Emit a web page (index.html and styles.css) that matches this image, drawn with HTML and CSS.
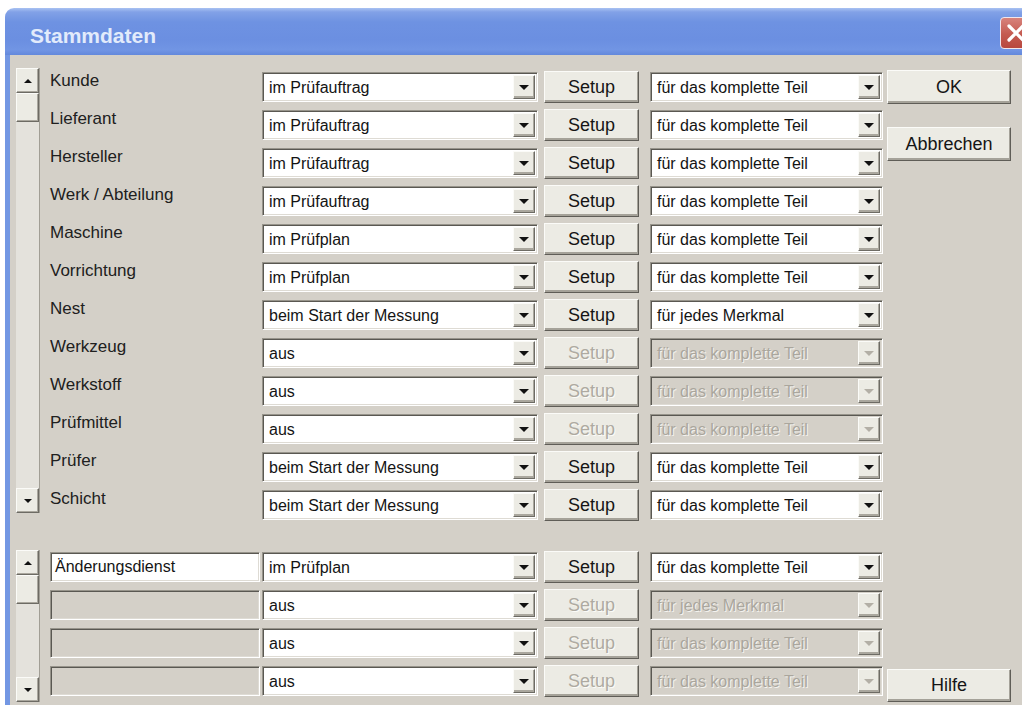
FILE: index.html
```html
<!DOCTYPE html>
<html lang="de">
<head>
<meta charset="utf-8">
<title>Stammdaten</title>
<link rel="stylesheet" href="styles.css">
</head>
<body>
<div class="window">
  <div class="titlebar">
    <span class="title">Stammdaten</span>
    <span class="close" aria-label="Schließen">
      <svg width="30" height="30" viewBox="0 0 30 30"><path d="M8 8 L22 22 M22 8 L8 22" stroke="#fff" stroke-width="3.2" stroke-linecap="round"/></svg>
    </span>
  </div>
  <div class="frame">
    <div class="main">
      <section class="group upper">
        <div class="vscroll tall">
          <span class="sbtn"><i class="tri up"></i></span>
          <span class="thumb"></span>
          <span class="track"></span>
          <span class="sbtn"><i class="tri down"></i></span>
        </div>
        <div class="rows">
          <span class="label">Kunde</span>
          <span class="combo wide"><span class="val">im Prüfauftrag</span><span class="drop"><i class="tri down"></i></span></span>
          <span class="btn setup">Setup</span>
          <span class="combo"><span class="val">für das komplette Teil</span><span class="drop"><i class="tri down"></i></span></span>

          <span class="label">Lieferant</span>
          <span class="combo wide"><span class="val">im Prüfauftrag</span><span class="drop"><i class="tri down"></i></span></span>
          <span class="btn setup">Setup</span>
          <span class="combo"><span class="val">für das komplette Teil</span><span class="drop"><i class="tri down"></i></span></span>

          <span class="label">Hersteller</span>
          <span class="combo wide"><span class="val">im Prüfauftrag</span><span class="drop"><i class="tri down"></i></span></span>
          <span class="btn setup">Setup</span>
          <span class="combo"><span class="val">für das komplette Teil</span><span class="drop"><i class="tri down"></i></span></span>

          <span class="label">Werk / Abteilung</span>
          <span class="combo wide"><span class="val">im Prüfauftrag</span><span class="drop"><i class="tri down"></i></span></span>
          <span class="btn setup">Setup</span>
          <span class="combo"><span class="val">für das komplette Teil</span><span class="drop"><i class="tri down"></i></span></span>

          <span class="label">Maschine</span>
          <span class="combo wide"><span class="val">im Prüfplan</span><span class="drop"><i class="tri down"></i></span></span>
          <span class="btn setup">Setup</span>
          <span class="combo"><span class="val">für das komplette Teil</span><span class="drop"><i class="tri down"></i></span></span>

          <span class="label">Vorrichtung</span>
          <span class="combo wide"><span class="val">im Prüfplan</span><span class="drop"><i class="tri down"></i></span></span>
          <span class="btn setup">Setup</span>
          <span class="combo"><span class="val">für das komplette Teil</span><span class="drop"><i class="tri down"></i></span></span>

          <span class="label">Nest</span>
          <span class="combo wide"><span class="val">beim Start der Messung</span><span class="drop"><i class="tri down"></i></span></span>
          <span class="btn setup">Setup</span>
          <span class="combo"><span class="val">für jedes Merkmal</span><span class="drop"><i class="tri down"></i></span></span>

          <span class="label">Werkzeug</span>
          <span class="combo wide"><span class="val">aus</span><span class="drop"><i class="tri down"></i></span></span>
          <span class="btn setup disabled">Setup</span>
          <span class="combo disabled"><span class="val">für das komplette Teil</span><span class="drop"><i class="tri down"></i></span></span>

          <span class="label">Werkstoff</span>
          <span class="combo wide"><span class="val">aus</span><span class="drop"><i class="tri down"></i></span></span>
          <span class="btn setup disabled">Setup</span>
          <span class="combo disabled"><span class="val">für das komplette Teil</span><span class="drop"><i class="tri down"></i></span></span>

          <span class="label">Prüfmittel</span>
          <span class="combo wide"><span class="val">aus</span><span class="drop"><i class="tri down"></i></span></span>
          <span class="btn setup disabled">Setup</span>
          <span class="combo disabled"><span class="val">für das komplette Teil</span><span class="drop"><i class="tri down"></i></span></span>

          <span class="label">Prüfer</span>
          <span class="combo wide"><span class="val">beim Start der Messung</span><span class="drop"><i class="tri down"></i></span></span>
          <span class="btn setup">Setup</span>
          <span class="combo"><span class="val">für das komplette Teil</span><span class="drop"><i class="tri down"></i></span></span>

          <span class="label">Schicht</span>
          <span class="combo wide"><span class="val">beim Start der Messung</span><span class="drop"><i class="tri down"></i></span></span>
          <span class="btn setup">Setup</span>
          <span class="combo"><span class="val">für das komplette Teil</span><span class="drop"><i class="tri down"></i></span></span>
        </div>
      </section>

      <section class="group lower">
        <div class="vscroll short">
          <span class="sbtn"><i class="tri up"></i></span>
          <span class="thumb"></span>
          <span class="track"></span>
          <span class="sbtn"><i class="tri down"></i></span>
        </div>
        <div class="rows">
          <span class="field">Änderungsdienst</span>
          <span class="combo wide"><span class="val">im Prüfplan</span><span class="drop"><i class="tri down"></i></span></span>
          <span class="btn setup">Setup</span>
          <span class="combo"><span class="val">für das komplette Teil</span><span class="drop"><i class="tri down"></i></span></span>

          <span class="field disabled"></span>
          <span class="combo wide"><span class="val">aus</span><span class="drop"><i class="tri down"></i></span></span>
          <span class="btn setup disabled">Setup</span>
          <span class="combo disabled"><span class="val">für jedes Merkmal</span><span class="drop"><i class="tri down"></i></span></span>

          <span class="field disabled"></span>
          <span class="combo wide"><span class="val">aus</span><span class="drop"><i class="tri down"></i></span></span>
          <span class="btn setup disabled">Setup</span>
          <span class="combo disabled"><span class="val">für das komplette Teil</span><span class="drop"><i class="tri down"></i></span></span>

          <span class="field disabled"></span>
          <span class="combo wide"><span class="val">aus</span><span class="drop"><i class="tri down"></i></span></span>
          <span class="btn setup disabled">Setup</span>
          <span class="combo disabled"><span class="val">für das komplette Teil</span><span class="drop"><i class="tri down"></i></span></span>
        </div>
      </section>
    </div>

    <div class="side">
      <span class="btn action">OK</span>
      <span class="btn action cancel">Abbrechen</span>
      <span class="btn action help">Hilfe</span>
    </div>
  </div>
</div>
</body>
</html>
```

FILE: styles.css
```css
html, body {
  margin: 0;
  padding: 0;
  background: #ffffff;
  overflow: hidden;
}

body {
  width: 1022px;
  height: 705px;
  font-family: "Liberation Sans", Arial, sans-serif;
  color: #1c1c1c;
}

/* ---------- window chrome ---------- */
.window {
  margin: 8px 0 0 5px;
  width: 1032px;
}

.titlebar {
  height: 47px;
  display: flex;
  align-items: flex-start;
  border-radius: 9px 9px 0 0;
  background: linear-gradient(180deg,
    #a9c2f2 0px,
    #82a1e7 4px,
    #6e92e2 14px,
    #6b8fe1 32px,
    #7195e4 42px,
    #6388dc 47px);
}

.title {
  margin: 16px 0 0 25px;
  font-size: 21px;
  line-height: 24px;
  font-weight: bold;
  color: #e2ebfb;
}

.close {
  margin: 9px 5px 0 auto;
  width: 30px;
  height: 30px;
  border: 1px solid #f1e6ec;
  border-radius: 4px;
  background: linear-gradient(180deg, #d8837c 0%, #c45a50 55%, #b8483f 100%);
  display: flex;
}

.frame {
  height: 650px;
  display: flex;
  border-left: 5px solid #7397e3;
  background: #d4d0c8;
}

/* ---------- left part: grouped rows with scrollbars ---------- */
.main {
  display: flex;
  flex-direction: column;
  padding: 13px 0 0 6px;
}

.group {
  display: flex;
  align-items: flex-start;
}

.group.lower {
  margin-top: 29px;
}

.vscroll {
  width: 24px;
  display: flex;
  flex-direction: column;
  background: #e4e2dc;
  border-right: 1px solid #a19e95;
  box-sizing: border-box;
}

.vscroll.tall { height: 445px; }
.vscroll.short { height: 152px; }

.vscroll .track { flex: 1; }

.sbtn, .thumb {
  height: 25px;
  box-sizing: border-box;
  background: #ecebe4;
  border: 1px solid;
  border-color: #fbfbf8 #6d6b64 #6d6b64 #fbfbf8;
  box-shadow: inset -1px -1px #aaa79e;
  display: flex;
  align-items: center;
  justify-content: center;
}

.thumb { height: 29px; }

.rows {
  display: grid;
  grid-template-columns: 212px 282px 106px 233px;
  grid-auto-rows: 32px;
  row-gap: 6px;
  align-items: center;
  margin-left: 10px;
}

.upper .rows { margin-top: 3px; }
.lower .rows { margin-top: 1px; }

.label {
  align-self: start;
  font-size: 17px;
  line-height: 20px;
  color: #202020;
}

/* sunken edit field and combo boxes */
.field, .combo {
  height: 30px;
  box-sizing: border-box;
  border: 1px solid;
  border-color: #97948b #ffffff #ffffff #97948b;
  box-shadow: inset 1px 1px #5a5852, inset -1px -1px #dedbd4;
  background: #ffffff;
  font-size: 16px;
  color: #141414;
  display: flex;
  align-items: center;
}

.field {
  width: 210px;
  padding-left: 4px;
}

.field.disabled {
  background: #d4d0c8;
}

.combo {
  width: 233px;
  padding: 2px;
}

.combo.wide { width: 276px; }

.combo .val {
  flex: 1;
  padding: 2px 0 0 4px;
  white-space: nowrap;
  overflow: hidden;
}

.combo .drop {
  width: 22px;
  align-self: stretch;
  box-sizing: border-box;
  background: #ecebe4;
  border: 1px solid;
  border-color: #fbfbf8 #6d6b64 #6d6b64 #fbfbf8;
  box-shadow: inset -1px -2px #aaa79e;
  display: flex;
  align-items: center;
  justify-content: center;
}

.combo.disabled {
  background: #d4d0c8;
}

.combo.disabled .val {
  color: #aaa69d;
  text-shadow: 1px 1px 0 #f4f3ef;
}

.tri {
  width: 0;
  height: 0;
  border-left: 5px solid transparent;
  border-right: 5px solid transparent;
}

.tri.down { border-top: 5px solid #111; margin-top: 1px; }
.tri.up { border-bottom: 5px solid #111; }

.sbtn .tri {
  border-left-width: 4px;
  border-right-width: 4px;
}
.sbtn .tri.down { border-top-width: 4px; }
.sbtn .tri.up { border-bottom-width: 4px; }

.combo.disabled .tri.down { border-top-color: #b3afa6; }

/* raised push buttons */
.btn {
  box-sizing: border-box;
  background: #ecebe4;
  border: 1px solid;
  border-color: #fbfbf8 #5f5d57 #5f5d57 #fbfbf8;
  box-shadow: inset -1px -2px #a5a299;
  display: flex;
  align-items: center;
  justify-content: center;
  font-size: 18px;
  color: #151515;
}

.btn.setup {
  width: 95px;
  height: 32px;
}

.btn.disabled {
  color: #aeaaa1;
  text-shadow: 1px 1px 0 #fbfbf7;
}

/* ---------- right part: dialog buttons ---------- */
.side {
  display: flex;
  flex-direction: column;
  width: 124px;
  margin-left: 4px;
  padding: 15px 0 3px;
  box-sizing: border-box;
}

.btn.action {
  height: 34px;
}

.btn.cancel { margin-top: 23px; }

.btn.help {
  margin-top: auto;
  height: 33px;
}
```
